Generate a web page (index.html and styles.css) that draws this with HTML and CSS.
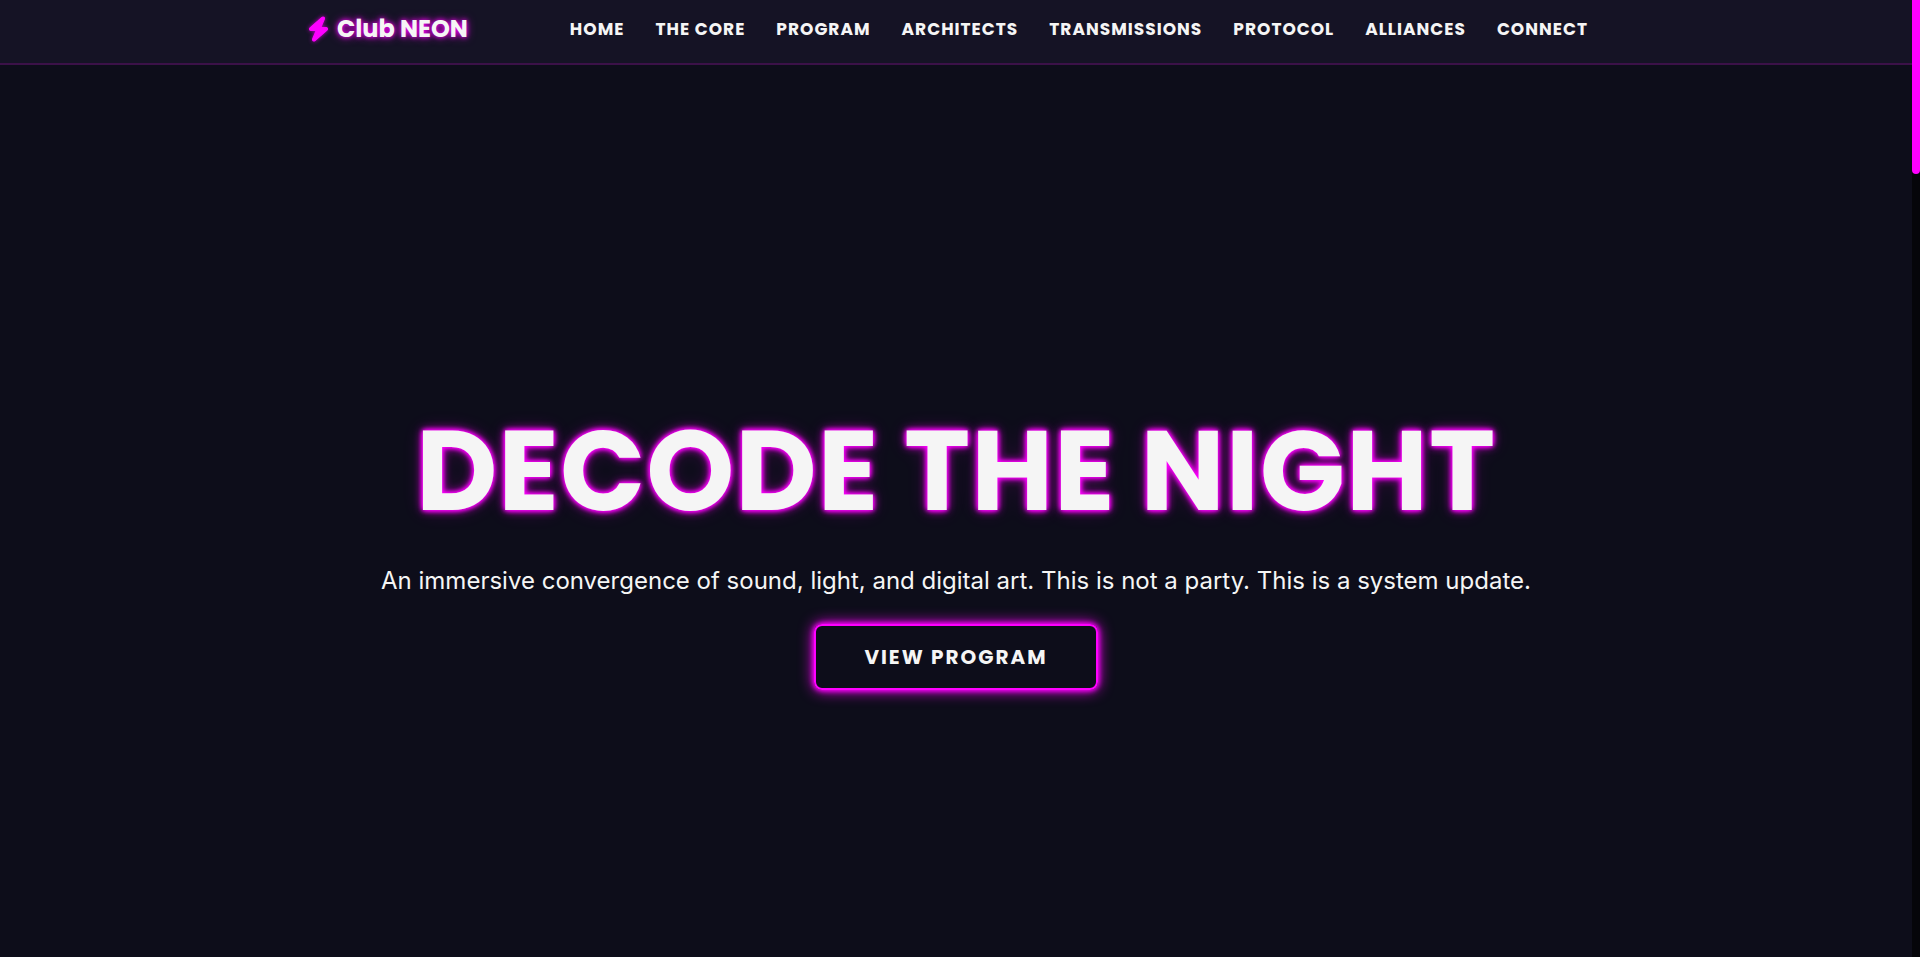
FILE: index.html
```html
<!DOCTYPE html>
<html lang="en">
<head>
    <meta charset="UTF-8">
    <meta name="viewport" content="width=device-width, initial-scale=1.0">
    <title>Club NEON</title>
    <link rel="stylesheet" href="styles.css">
</head>
<body>
    <header class="header">
        <div class="container">
            <a href="#home" class="logo">
                <svg class="logo-icon" viewBox="0 0 448 512" aria-hidden="true"><path d="M349.4 44.6c5.9-13.7 1.5-29.7-10.6-38.5s-28.6-8-39.9 1.8l-256 224c-10 8.8-13.6 22.9-8.9 35.3S50.7 288 64 288l111.5 0L98.6 467.4c-5.9 13.7-1.5 29.7 10.6 38.5s28.6 8 39.9-1.8l256-224c10-8.8 13.6-22.9 8.9-35.3s-16.6-20.7-30-20.7l-111.5 0L349.4 44.6z"/></svg>
                <span>Club NEON</span>
            </a>
            <nav>
                <ul class="nav-links">
                    <li><a href="#home">Home</a></li>
                    <li><a href="#core">The Core</a></li>
                    <li><a href="#program">Program</a></li>
                    <li><a href="#architects">Architects</a></li>
                    <li><a href="#transmissions">Transmissions</a></li>
                    <li><a href="#protocol">Protocol</a></li>
                    <li><a href="#alliances">Alliances</a></li>
                    <li><a href="#connect">Connect</a></li>
                </ul>
            </nav>
        </div>
    </header>

    <main>
        <section class="hero" id="home">
            <h1>Decode the Night</h1>
            <p>An immersive convergence of sound, light, and digital art. This is not a party. This is a system update.</p>
            <a href="#program" class="btn">View Program</a>
        </section>
    </main>

    <div class="scroll-track" aria-hidden="true"><div class="scroll-thumb"></div></div>
</body>
</html>
```
FILE: styles.css
```css
:root {
    --bg: #0d0d1a;
    --surface: #151325;
    --neon: #ff00ff;
    --text: #f5f5f5;
    --font-heading: 'Poppins', 'Inter', sans-serif;
    --font-body: 'Inter', sans-serif;
}

* { box-sizing: border-box; margin: 0; padding: 0; }

body {
    display: flex;
    flex-direction: column;
    min-height: 100vh;
    padding-right: 8px;
    background: var(--bg);
    color: var(--text);
    font-family: var(--font-body);
}

a { color: inherit; text-decoration: none; }

/* Header */
.header { padding: 14px 16px 19px 0; background: var(--surface); border-bottom: 2px solid #3b1148; }

.container {
    display: flex;
    justify-content: space-between;
    align-items: center;
    max-width: 1280px;
    margin: 0 auto;
}

.logo {
    display: flex;
    align-items: center;
    gap: 8px;
    font-family: var(--font-heading);
    font-size: 24px;
    line-height: 30px;
    font-weight: 700;
    white-space: nowrap;
    text-shadow: 0 0 5px var(--neon), 0 0 10px rgba(255, 0, 255, 0.6);
}
.logo-icon { width: 21px; height: 24px; fill: var(--neon); stroke: var(--neon); stroke-width: 24; overflow: visible; filter: drop-shadow(0 0 2px rgba(255, 0, 255, 0.7)); }

.nav-links { display: flex; gap: 31px; list-style: none; }
.nav-links a {
    font-family: var(--font-heading);
    font-size: 17px;
    line-height: 24px;
    font-weight: 700;
    letter-spacing: 1px;
    text-transform: uppercase;
    white-space: nowrap;
}

/* Hero */
main { flex: 1; display: flex; }
.hero {
    flex: 1;
    display: flex;
    flex-direction: column;
    align-items: center;
    justify-content: center;
    padding: 104px 32px 32px;
    text-align: center;
}
.hero h1 {
    margin-bottom: 24px;
    font-family: var(--font-heading);
    font-size: 112px;
    line-height: 134px;
    font-weight: 700;
    letter-spacing: 1px;
    text-transform: uppercase;
    text-shadow: 0 0 5px var(--neon), 0 0 5px var(--neon), 0 0 10px var(--neon), 0 0 20px rgba(255, 0, 255, 0.2);
}
.hero p { margin-bottom: 24px; font-size: 24px; line-height: 38px; }

.btn {
    padding: 16px 48px;
    border: 2px solid var(--neon);
    border-radius: 8px;
    font-family: var(--font-heading);
    font-size: 20px;
    line-height: 30px;
    font-weight: 700;
    letter-spacing: 2px;
    text-transform: uppercase;
    box-shadow: 0 0 5px 1px var(--neon), 0 0 15px var(--neon);
}

/* Scrollbar */
.scroll-track { position: fixed; top: 0; right: 0; bottom: 0; width: 8px; background: #05050a; }
.scroll-thumb { height: 174px; border-radius: 0 0 4px 4px; background: var(--neon); }
```
